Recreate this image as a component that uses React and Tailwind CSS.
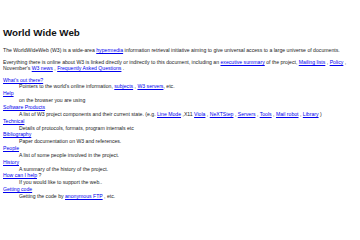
export default function App() {
  const A = ({ children }) => (
    <a href="#" className="text-[#0000ee] underline">{children}</a>
  );
  const items = [
    [<A>What's out there?</A>, <>Pointers to the world's online information, <A>subjects</A> , <A>W3 servers</A>, etc.</>],
    [<A>Help</A>, <>on the browser you are using</>],
    [<A>Software Products</A>, <>A list of W3 project components and their current state. (e.g. <A>Line Mode</A> ,X11 <A>Viola</A> , <A>NeXTStep</A> , <A>Servers</A> , <A>Tools</A> , <A>Mail robot</A> , <A>Library</A> )</>],
    [<A>Technical</A>, <>Details of protocols, formats, program internals etc</>],
    [<A>Bibliography</A>, <>Paper documentation on W3 and references.</>],
    [<A>People</A>, <>A list of some people involved in the project.</>],
    [<A>History</A>, <>A summary of the history of the project.</>],
    [<><A>How can I help</A> ?</>, <>If you would like to support the web..</>],
    [<A>Getting code</A>, <>Getting the code by <A>anonymous FTP</A> , etc.</>],
  ];
  return (
    <div className="w-[360px] h-[240px] bg-white overflow-hidden pl-[3px] pr-[2px] pt-[28px] text-[#222] font-['Liberation_Sans',Arial,sans-serif] text-[5.15px] leading-[6.85px]">
      <h1 className="font-bold text-[9.8px] leading-[10px] text-[#111]">World Wide Web</h1>
      <p className="mt-[8.6px]">The WorldWideWeb (W3) is a wide-area <A>hypermedia</A> information retrieval initiative aiming to give universal access to a large universe of documents.</p>
      <p className="mt-[5.2px]">Everything there is online about W3 is linked directly or indirectly to this document, including an <A>executive summary</A> of the project, <A>Mailing lists</A> , <A>Policy</A> , November's <A>W3 news</A> , <A>Frequently Asked Questions</A> .</p>
      <dl className="mt-[4.3px]">
        {items.map(([dt, dd], i) => (
          <div key={i}>
            <dt className="h-[6.85px]">{dt}</dt>
            <dd className="pl-[16px] h-[6.85px]">{dd}</dd>
          </div>
        ))}
      </dl>
    </div>
  );
}
